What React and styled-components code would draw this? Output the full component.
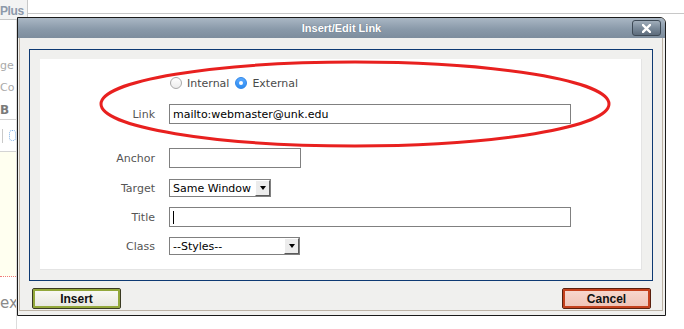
import styled, { createGlobalStyle } from "styled-components";

const GlobalStyle = createGlobalStyle`
  html, body { margin: 0; padding: 0; background: #fff; }
  body { font-family: "DejaVu Sans", Verdana, sans-serif; font-size: 11px; }
`;

const Page = styled.div`
  position: relative;
  width: 684px;
  height: 329px;
  overflow: hidden;
  background: #fff;
`;

/* ---------- page behind the dialog ---------- */
const Backdrop = styled.div`
  display: flex;
  flex-direction: column;
  height: 100%;
`;

const TopBar = styled.div`
  display: flex;
  height: 20px;
`;

const Tab = styled.div`
  width: 28px;
  box-sizing: border-box;
  border-right: 1px solid #c8c8c8;
  border-bottom: 1px solid #c8c8c8;
  background: #f3f3f3;
  color: #8d99aa;
  font: bold 12px/11px "Liberation Sans", Arial, sans-serif;
  letter-spacing: -0.4px;
  display: flex;
  align-items: flex-end;
  padding-bottom: 2px;
  overflow: hidden;
`;

const TopLine = styled.div`
  flex: 1;
  height: 13px;
  border-bottom: 1px solid #c8c8c8;
`;

const LeftColumn = styled.div`
  width: 16px;
  flex: 1;
  display: flex;
  flex-direction: column;
  border-right: 1px solid #dcdcdc;
  overflow: hidden;
`;

const Ghost = styled.div`
  margin-top: ${(p) => p.$top}px;
  color: ${(p) => p.$color || "#aaa"};
  font-size: ${(p) => p.$size || 11}px;
  font-weight: ${(p) => (p.$bold ? "bold" : "normal")};
  white-space: nowrap;
  line-height: 12px;
`;

const ToolRow = styled.div`
  margin-top: 3px;
  height: 31px;
  border-top: 1px solid #d4d4d4;
  border-bottom: 1px solid #d4d4d4;
  display: flex;
  align-items: center;
  gap: 6px;
  padding-left: 2px;
`;

const Sep = styled.div`
  width: 1px;
  height: 14px;
  background: #c9c9c9;
`;

const DotIcon = styled.div`
  width: 5px;
  height: 9px;
  border: 1px dotted #7fb0e6;
  border-radius: 3px;
`;

const YellowArea = styled.div`
  height: 124px;
  background: #fffff0;
  border-bottom: 1px dotted #f07a7a;
`;

/* ---------- dialog ---------- */
const Dialog = styled.div`
  position: absolute;
  left: 17px;
  top: 17px;
  width: 649px;
  height: 299px;
  box-sizing: border-box;
  border: 1px solid #1b1b1b;
  border-top-right-radius: 6px;
  background: #f0f0ee;
  display: flex;
  flex-direction: column;
`;

const TitleBar = styled.div`
  height: 20px;
  flex: none;
  display: grid;
  grid-template-columns: 1fr auto 1fr;
  align-items: center;
  border-top-right-radius: 5px;
  background: linear-gradient(#aab7c4, #8a9aaa 55%, #7d8d9d);
`;

const TitleText = styled.div`
  grid-column: 2;
  color: #fff;
  font: bold 11px "Liberation Sans", Arial, sans-serif;
  text-shadow: 0 0 1px #6d7c8b, 0 0 1px #6d7c8b;
`;

const CloseButton = styled.div`
  grid-column: 3;
  justify-self: end;
  margin-right: 4px;
  width: 29px;
  height: 16px;
  box-sizing: border-box;
  border: 1px solid #3e4a56;
  border-radius: 3px;
  background: linear-gradient(#a1aebb, #7a8a9a 50%, #5d6c7c);
  display: flex;
  align-items: center;
  justify-content: center;
`;

const Frame = styled.div`
  flex: 1;
  margin: 0 2px 4px 1px;
  border: 1px solid #bdb3a6;
  border-top: none;
  padding: 11px 9px 0 9px;
  display: flex;
  flex-direction: column;
`;

const Panel = styled.div`
  border: 1px solid #0e3a73;
  padding: 9px 10px 10px;
  background: #f0f0ee;
`;

const Content = styled.div`
  height: 211px;
  box-sizing: border-box;
  background: #fff;
  border-right: 1px solid #e4e4e4;
  border-bottom: 1px solid #e4e4e4;
  padding-top: 15px;
  display: flex;
  flex-direction: column;
`;

const Row = styled.div`
  margin-top: ${(p) => p.$gap || 0}px;
  height: ${(p) => p.$h}px;
  display: grid;
  grid-template-columns: 115px 1fr;
  column-gap: 14px;
  align-items: center;
`;

const Label = styled.div`
  text-align: right;
  color: #555;
`;

const RadioGroup = styled.div`
  display: flex;
  align-items: center;
  padding-left: 1px;
  color: #4a4a4a;
`;

const Radio = styled.span`
  width: 12px;
  height: 12px;
  box-sizing: border-box;
  border-radius: 50%;
  margin: 0 5px 0 ${(p) => p.$left || 0}px;
  display: inline-flex;
  align-items: center;
  justify-content: center;
  border: 1px solid ${(p) => (p.$on ? "#2f86e8" : "#a9a9a9")};
  background: ${(p) =>
    p.$on ? "linear-gradient(#5aa9ff, #2d8cf0)" : "linear-gradient(#fff, #ececec)"};
  &::after {
    content: "";
    display: ${(p) => (p.$on ? "block" : "none")};
    width: 4px;
    height: 4px;
    border-radius: 50%;
    background: #fff;
  }
`;

const Field = styled.div`
  width: ${(p) => p.$w}px;
  height: ${(p) => p.$h || 20}px;
  box-sizing: border-box;
  border: 1px solid #808080;
  padding: 0 3px;
  display: flex;
  align-items: center;
  color: #000;
  white-space: nowrap;
`;

const Caret = styled.span`
  width: 1px;
  height: 13px;
  background: #000;
`;

const Select = styled.div`
  width: ${(p) => p.$w}px;
  height: 18px;
  box-sizing: border-box;
  border: 1px solid #808080;
  display: flex;
  align-items: stretch;
  color: #000;
`;

const SelectText = styled.div`
  flex: 1;
  padding-left: 3px;
  display: flex;
  align-items: center;
  white-space: nowrap;
  overflow: hidden;
`;

const SelectArrow = styled.div`
  width: 15px;
  box-sizing: border-box;
  background: #ececec;
  border-top: 1px solid #fff;
  border-left: 1px solid #fff;
  border-right: 1px solid #5a5a5a;
  border-bottom: 1px solid #5a5a5a;
  display: flex;
  align-items: center;
  justify-content: center;
  &::after {
    content: "";
    border-left: 3px solid transparent;
    border-right: 3px solid transparent;
    border-top: 4px solid #000;
  }
`;

const Footer = styled.div`
  display: flex;
  justify-content: space-between;
  padding: 7px 2px 0 3px;
`;

const ActionButton = styled.div`
  width: 89px;
  height: 21px;
  box-sizing: border-box;
  border: 1px solid ${(p) => p.$edge};
  border-radius: 2px;
  box-shadow: inset 0 0 0 2px ${(p) => p.$ring};
  background: linear-gradient(${(p) => p.$top}, ${(p) => p.$bottom});
  display: flex;
  align-items: center;
  justify-content: center;
  color: #111;
  font: bold 12px "Liberation Sans", Arial, sans-serif;
`;

const Mark = styled.svg`
  position: absolute;
  left: 0;
  top: 0;
  pointer-events: none;
`;

export default function App() {
  return (
    <Page>
      <GlobalStyle />
      <Backdrop>
        <TopBar>
          <Tab>Plus</Tab>
          <TopLine />
        </TopBar>
        <LeftColumn>
          <Ghost $top={40}>ge</Ghost>
          <Ghost $top={10}>Co</Ghost>
          <Ghost $top={10} $bold $size={12} $color="#7a7a7a">B</Ghost>
          <ToolRow>
            <Sep />
            <DotIcon />
          </ToolRow>
          <YellowArea />
          <Ghost $top={20} $size={15} $color="#8a8a8a">ex</Ghost>
        </LeftColumn>
      </Backdrop>

      <Dialog>
        <TitleBar>
          <TitleText>Insert/Edit Link</TitleText>
          <CloseButton>
            <svg width="9" height="9" viewBox="0 0 9 9">
              <path d="M1 1 L8 8 M8 1 L1 8" stroke="#fff" strokeWidth="2.4" strokeLinecap="square" />
            </svg>
          </CloseButton>
        </TitleBar>
        <Frame>
          <Panel>
            <Content>
              <Row $h={18}>
                <span />
                <RadioGroup>
                  <Radio />
                  Internal
                  <Radio $on $left={6} />
                  External
                </RadioGroup>
              </Row>
              <Row $h={20} $gap={12}>
                <Label>Link</Label>
                <Field $w={402}>mailto:webmaster@unk.edu</Field>
              </Row>
              <Row $h={20} $gap={24}>
                <Label>Anchor</Label>
                <Field $w={132} />
              </Row>
              <Row $h={18} $gap={11}>
                <Label>Target</Label>
                <Select $w={102}>
                  <SelectText>Same Window</SelectText>
                  <SelectArrow />
                </Select>
              </Row>
              <Row $h={20} $gap={10}>
                <Label>Title</Label>
                <Field $w={402}>
                  <Caret />
                </Field>
              </Row>
              <Row $h={18} $gap={10}>
                <Label>Class</Label>
                <Select $w={131}>
                  <SelectText>--Styles--</SelectText>
                  <SelectArrow />
                </Select>
              </Row>
            </Content>
          </Panel>
          <Footer>
            <ActionButton $edge="#3a3a22" $ring="#93a83b" $top="#fbfbf6" $bottom="#e6e6de">
              Insert
            </ActionButton>
            <ActionButton $edge="#5a200e" $ring="#c4411d" $top="#f8d8cf" $bottom="#efc2b5">
              Cancel
            </ActionButton>
          </Footer>
        </Frame>
      </Dialog>

      <Mark width="684" height="329">
        <ellipse cx="355" cy="104" rx="254" ry="42" fill="none" stroke="#e8201f" strokeWidth="3" />
      </Mark>
    </Page>
  );
}
